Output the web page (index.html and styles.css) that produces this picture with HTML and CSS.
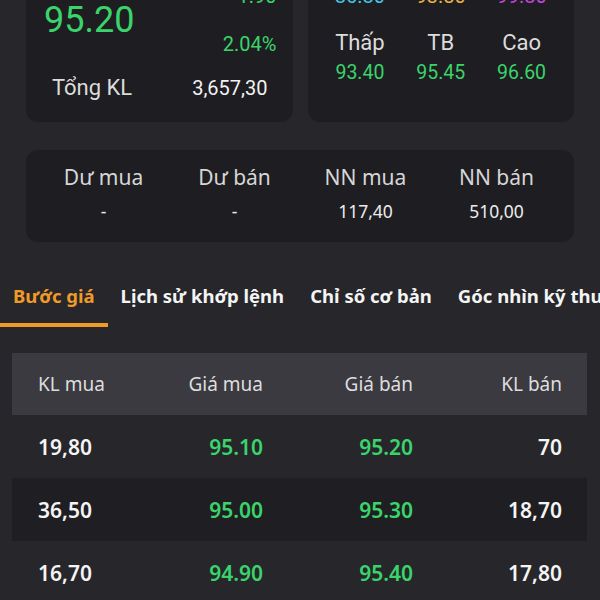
FILE: index.html
```html
<!DOCTYPE html>
<html>
<head>
<meta charset="utf-8">
<title>Bước giá</title>
<link rel="stylesheet" href="styles.css">
</head>
<body>

<div class="top">
  <div class="card quote">
    <div class="price-row">
      <div class="last">95.20</div>
      <div class="change">
        <div>1.90</div>
        <div>2.04%</div>
      </div>
    </div>
    <div class="total">
      <span>Tổng KL</span>
      <span class="total-val">3,657,30</span>
    </div>
  </div>

  <div class="card ranges">
    <div class="range">
      <div class="ref floor">86.80</div>
      <div class="label">Thấp</div>
      <div class="val">93.40</div>
    </div>
    <div class="range">
      <div class="ref basic">93.30</div>
      <div class="label">TB</div>
      <div class="val">95.45</div>
    </div>
    <div class="range">
      <div class="ref ceil">99.80</div>
      <div class="label">Cao</div>
      <div class="val">96.60</div>
    </div>
  </div>
</div>

<div class="card stats">
  <div class="stat"><div class="stat-label">Dư mua</div><div class="stat-val">-</div></div>
  <div class="stat"><div class="stat-label">Dư bán</div><div class="stat-val">-</div></div>
  <div class="stat"><div class="stat-label">NN mua</div><div class="stat-val">117,40</div></div>
  <div class="stat"><div class="stat-label">NN bán</div><div class="stat-val">510,00</div></div>
</div>

<div class="tabs">
  <div class="tab active">Bước giá</div>
  <div class="tab">Lịch sử khớp lệnh</div>
  <div class="tab">Chỉ số cơ bản</div>
  <div class="tab">Góc nhìn kỹ thuật</div>
</div>

<div class="book">
  <div class="book-row head">
    <div>KL mua</div><div>Giá mua</div><div>Giá bán</div><div>KL bán</div>
  </div>
  <div class="book-row">
    <div>19,80</div><div class="up">95.10</div><div class="up">95.20</div><div>70</div>
  </div>
  <div class="book-row alt">
    <div>36,50</div><div class="up">95.00</div><div class="up">95.30</div><div>18,70</div>
  </div>
  <div class="book-row">
    <div>16,70</div><div class="up">94.90</div><div class="up">95.40</div><div>17,80</div>
  </div>
</div>

</body>
</html>
```

FILE: styles.css
```css
body {
  margin: 0;
  background-color: #26262b;
  color: #e6e6e6;
  font-family: "Noto Sans", sans-serif;
  overflow: hidden;
}

.card {
  background-color: #1e1e22;
  border-radius: 12px;
}

/* top row, scrolled partly out of view */
.top {
  display: grid;
  grid-template-columns: minmax(0, 1fr) minmax(0, 1fr);
  gap: 15px;
  margin: -40px 26px 0 26px;
  font-family: Roboto, sans-serif;
}

.quote {
  padding: 12px 16px 19px 18px;
}

.price-row {
  display: flex;
  justify-content: space-between;
  align-items: center;
}

.last {
  font-size: 36px;
  color: #3ad46b;
}

.change {
  text-align: right;
  font-size: 20px;
  line-height: 48px;
  color: #3ad46b;
}

.total {
  display: flex;
  justify-content: space-between;
  margin: 5px 9px 0 8px;
  line-height: 30px;
  font-size: 22px;
  color: #dcdcdc;
}

.total-val {
  font-size: 20px;
  color: #f2f2f2;
}

.ranges {
  display: flex;
  padding: 12px 12px 34px 12px;
}

.range {
  flex: 1;
  text-align: center;
}

.ref {
  font-size: 20px;
  line-height: 48px;
}

.floor { color: #45c6e4; }
.basic { color: #e9b446; }
.ceil  { color: #c544dc; }

.range .label {
  margin-top: 8px;
  line-height: 30px;
  font-size: 22px;
  color: #dcdcdc;
}

.range .val {
  line-height: 30px;
  font-size: 19.5px;
  color: #3ad46b;
}

.stats {
  display: flex;
  margin: 28px 26px 0 26px;
  padding: 12px 12px 16px 12px;
}

.stat {
  flex: 1;
  text-align: center;
}

.stat-label {
  font-size: 21px;
  line-height: 30px;
  color: #d6d6d6;
}

.stat-val {
  margin-top: 4px;
  font-size: 17.5px;
  line-height: 30px;
  color: #ececec;
}

/* tabs */
.tabs {
  display: flex;
  margin-top: 28px;
  white-space: nowrap;
  overflow: hidden;
}

.tab {
  padding: 13px 13px 14px 13px;
  line-height: 26px;
  font-size: 18.5px;
  font-weight: bold;
  color: #f4f4f4;
  border-bottom: 4px solid transparent;
}

.tab.active {
  color: #f09a28;
  border-bottom-color: #f09a28;
}

/* order book */
.book {
  margin: 26px 13px 0 12px;
}

.book-row {
  display: grid;
  grid-template-columns: 75px 150px 150px 1fr;
  align-items: center;
  height: 63px;
  padding: 0 25px 0 26px;
  font-size: 21px;
  font-weight: 600;
  color: #f4f4f4;
}

.book-row div {
  text-align: right;
}

.book-row div:first-child {
  text-align: left;
}

.book-row.head {
  height: 62px;
  background-color: #3a3a40;
  font-size: 19px;
  font-weight: normal;
  color: #dedede;
}

.book-row.alt {
  background-color: #1f1f23;
}

.up {
  color: #3ad46b;
}
```
